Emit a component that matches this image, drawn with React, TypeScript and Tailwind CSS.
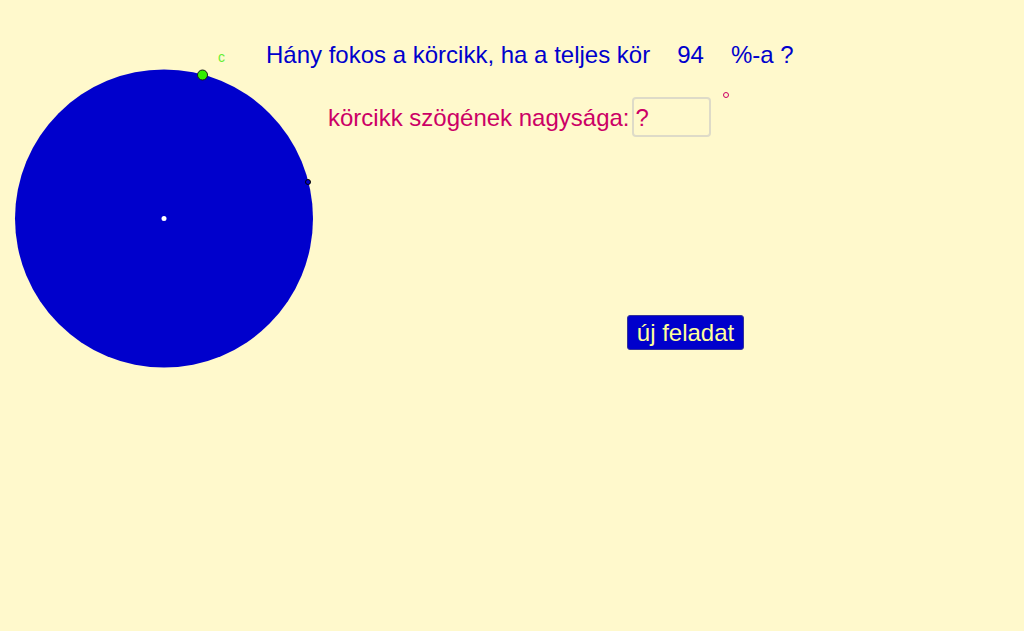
export default function App() {
  return (
    <div className="relative w-[1024px] h-[631px] overflow-hidden bg-[#fff9cc] font-['Liberation_Sans',Arial,sans-serif]">
      {/* construction canvas */}
      <svg className="absolute left-0 top-0" width="1024" height="631">
        <circle cx="164" cy="218.5" r="149" fill="#0000cc" />
        <circle cx="164" cy="218.5" r="2.5" fill="#ffffff" />
        <circle cx="308" cy="182" r="2.5" fill="#0000cc" stroke="#000" strokeWidth="1" />
        <circle cx="202.5" cy="75" r="5" fill="#33ee00" stroke="#1a1a1a" strokeWidth="1" />
      </svg>
      <span className="absolute left-[218px] top-[50px] text-[14px] leading-none text-[#66ee33]">c</span>

      {/* question */}
      <div className="absolute left-[266px] top-[43px] flex items-baseline gap-[27px] text-[24px] leading-none text-[#0000cc]">
        <span>Hány fokos a körcikk, ha a teljes kör</span>
        <span>94</span>
        <span>%-a ?</span>
      </div>

      {/* answer row */}
      <div className="absolute left-[328px] top-[97px] flex items-start gap-[2px] text-[24px] leading-none text-[#cc0066]">
        <span className="mt-[9px]">körcikk szögének nagysága:</span>
        <div className="w-[79px] h-[40px] rounded-[4px] border-2 border-[#dedbc8] flex items-center pl-[2px] pt-[1px]">
          ?
        </div>
      </div>
      <span className="absolute left-[723px] top-[92px] w-[6px] h-[6px] rounded-full border-[1.5px] border-[#cc0066]" />

      {/* button */}
      <button className="absolute left-[627px] top-[315px] w-[117px] h-[35px] rounded-[3px] bg-[#0000cc] border border-[#333399] text-[24px] leading-none text-[#ffff99]">
        új feladat
      </button>
    </div>
  );
}
